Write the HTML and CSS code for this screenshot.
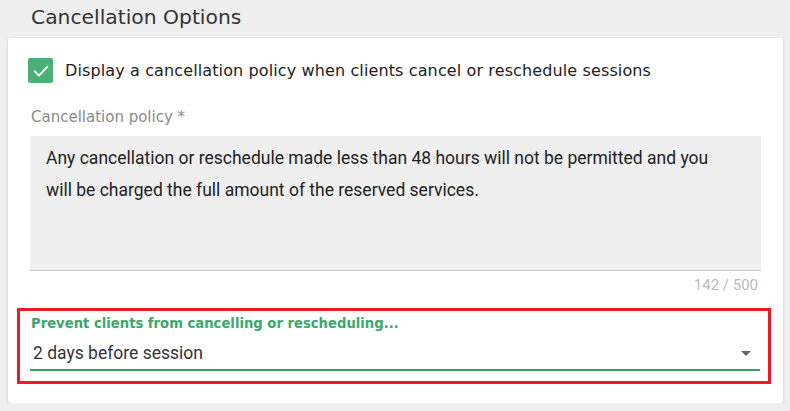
FILE: index.html
```html
<!DOCTYPE html>
<html lang="en">

<head>
  <meta charset="UTF-8" />
  <meta name="viewport" content="width=device-width, initial-scale=1.0" />
  <title>Cancellation Options</title>
  <link rel="stylesheet" href="styles.css">
</head>

<body>
  <div class="page">
    <h2 class="section-title">Cancellation Options</h2>
    <div class="card">
      <label class="check">
        <span class="check-box">
          <svg width="20" height="20" viewBox="0 0 24 24">
            <path d="M4.5 12.5l5 5L19.5 7" fill="none" stroke="#fff" stroke-width="2.4" stroke-linecap="round" stroke-linejoin="round" />
          </svg>
        </span>
        <span class="check-label">Display a cancellation policy when clients cancel or reschedule sessions</span>
      </label>

      <div class="field">
        <label class="field-label" for="policy">Cancellation policy *</label>
        <div class="textarea" id="policy">Any cancellation or reschedule made less than 48 hours will not be permitted and you will be charged the full amount of the reserved services.</div>
        <div class="counter">142 / 500</div>
      </div>

      <div class="highlight">
        <div class="select">
          <div class="select-label">Prevent clients from cancelling or rescheduling...</div>
          <div class="select-row">
            <span class="select-value">2 days before session</span>
            <span class="select-arrow"></span>
          </div>
        </div>
      </div>
    </div>
  </div>
</body>

</html>
```

FILE: styles.css
```css
body {
  margin: 0;
  background: #efefef;
  font-family: "DejaVu Sans", sans-serif;
}

.page {
  padding: 0 7px 0 8px;
}

.section-title {
  margin: 0;
  padding: 4px 0 0 23px;
  height: 34px;
  font-size: 20.3px;
  font-weight: normal;
  color: #333;
  line-height: 26px;
}

.card {
  background: #fff;
  border-radius: 3px;
  box-shadow: 0 1px 3px rgba(0, 0, 0, 0.18);
  padding: 20px 22px 19px 22px;
}

.check {
  display: flex;
  align-items: center;
  gap: 12px;
  margin-left: -2px;
  height: 25px;
}

.check-box {
  width: 25px;
  height: 25px;
  border-radius: 2px;
  background: #4caf78;
  display: flex;
  align-items: center;
  justify-content: center;
}

.check-label {
  font-size: 16px;
  letter-spacing: 0.12px;
  color: #222;
}

.field {
  margin-top: 25px;
}

.field-label {
  display: block;
  font-size: 15px;
  line-height: 18px;
  color: #8a8a8a;
  margin-left: 1px;
}

.textarea {
  margin-top: 10px;
  background: #efefef;
  border-bottom: 1px solid #ccc;
  height: 135px;
  box-sizing: border-box;
  padding: 6px 40px 6px 16px;
  font-family: Roboto, sans-serif;
  font-size: 17.5px;
  line-height: 32px;
  color: #222;
}

.counter {
  text-align: right;
  font-family: Roboto, sans-serif;
  font-size: 15px;
  line-height: 18px;
  color: #bbb;
  padding: 5px 3px 0 0;
}

.highlight {
  margin: 14px -10px 0 -13px;
  border: 3px solid #ec1c24;
  padding: 5px 8px 10px 10px;
}

.select-label {
  font-size: 13.2px;
  line-height: 16px;
  font-weight: bold;
  color: #3aa86b;
  margin-left: 1px;
}

.select-row {
  display: flex;
  align-items: center;
  justify-content: space-between;
  border-bottom: 2px solid #37a264;
  height: 32px;
  padding: 5px 9px 0 3px;
}

.select-value {
  font-family: Roboto, sans-serif;
  font-size: 17.5px;
  color: #333;
}

.select-arrow {
  width: 0;
  height: 0;
  border-left: 5px solid transparent;
  border-right: 5px solid transparent;
  border-top: 5px solid #666;
}
```
